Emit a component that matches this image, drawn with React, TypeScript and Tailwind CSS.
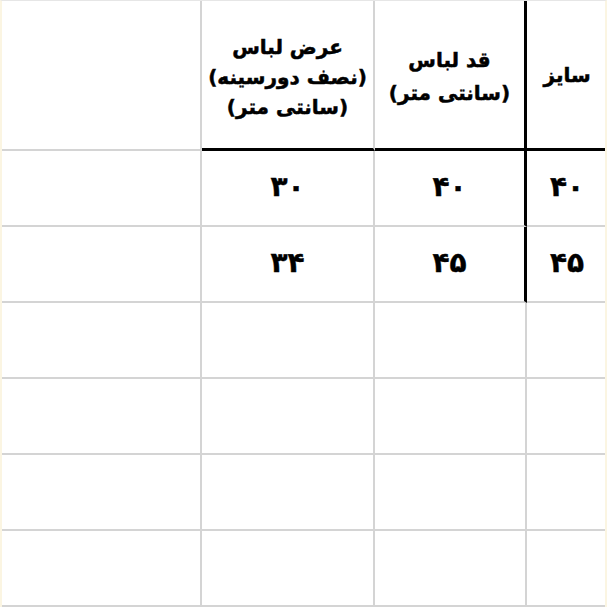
import React from "react";

const font = { fontFamily: '"DejaVu Sans", "Liberation Sans", sans-serif' };

export default function App() {
  const rows = [
    ["", "۳۰", "۴۰", "۴۰"],
    ["", "۳۴", "۴۵", "۴۵"],
    ["", "", "", ""],
    ["", "", "", ""],
    ["", "", "", ""],
    ["", "", "", ""],
  ];
  const num = "flex items-center justify-center text-[28px] leading-none pb-[2px] [-webkit-text-stroke:0.4px_black]";
  return (
    <div
      className="w-[607px] h-[607px] overflow-hidden bg-white text-black font-bold border-t border-t-[#e6e6e6] border-l-2 border-l-[#fbf5e2] border-r-2 border-r-[#fbf5e2]"
      style={font}
    >
      <div className="grid grid-cols-[200px_173px_152px_80px]">
        {/* header */}
        <div className="h-[150px] border-r-2 border-b-2 border-[#d4d4d4]" />
        <div className="h-[150px] border-r-2 border-[#d4d4d4] border-b-[3px] border-b-black flex flex-col items-center justify-center text-[20px] leading-[30px] pt-[4px] [-webkit-text-stroke:0.5px_black]" dir="rtl">
          <span>عرض لباس</span>
          <span>(نصف دورسینه)</span>
          <span>(سانتی متر)</span>
        </div>
        <div className="h-[150px] border-r-[3px] border-r-black border-b-[3px] border-b-black flex flex-col items-center justify-center text-[20px] leading-[33px] pt-[4px] [-webkit-text-stroke:0.5px_black]" dir="rtl">
          <span>قد لباس</span>
          <span>(سانتی متر)</span>
        </div>
        <div className="h-[150px] border-b-[3px] border-b-black flex items-center justify-center text-[20px] [-webkit-text-stroke:0.5px_black]" dir="rtl">
          <span>سایز</span>
        </div>
        {rows.map((r, i) => (
          <React.Fragment key={i}>
            <div className="h-[76px] border-r-2 border-b-2 border-[#d4d4d4]" />
            <div className={"h-[76px] border-r-2 border-b-2 border-[#d4d4d4] " + num}>{r[1]}</div>
            <div
              className={
                i < 2
                  ? "h-[76px] border-r-[3px] border-r-black border-b-2 border-b-[#d4d4d4] " + num
                  : "h-[76px] border-r-2 border-b-2 border-[#d4d4d4] " + num
              }
            >
              {r[2]}
            </div>
            <div className={"h-[76px] border-b-2 border-[#d4d4d4] " + num}>{r[3]}</div>
          </React.Fragment>
        ))}
      </div>
    </div>
  );
}
